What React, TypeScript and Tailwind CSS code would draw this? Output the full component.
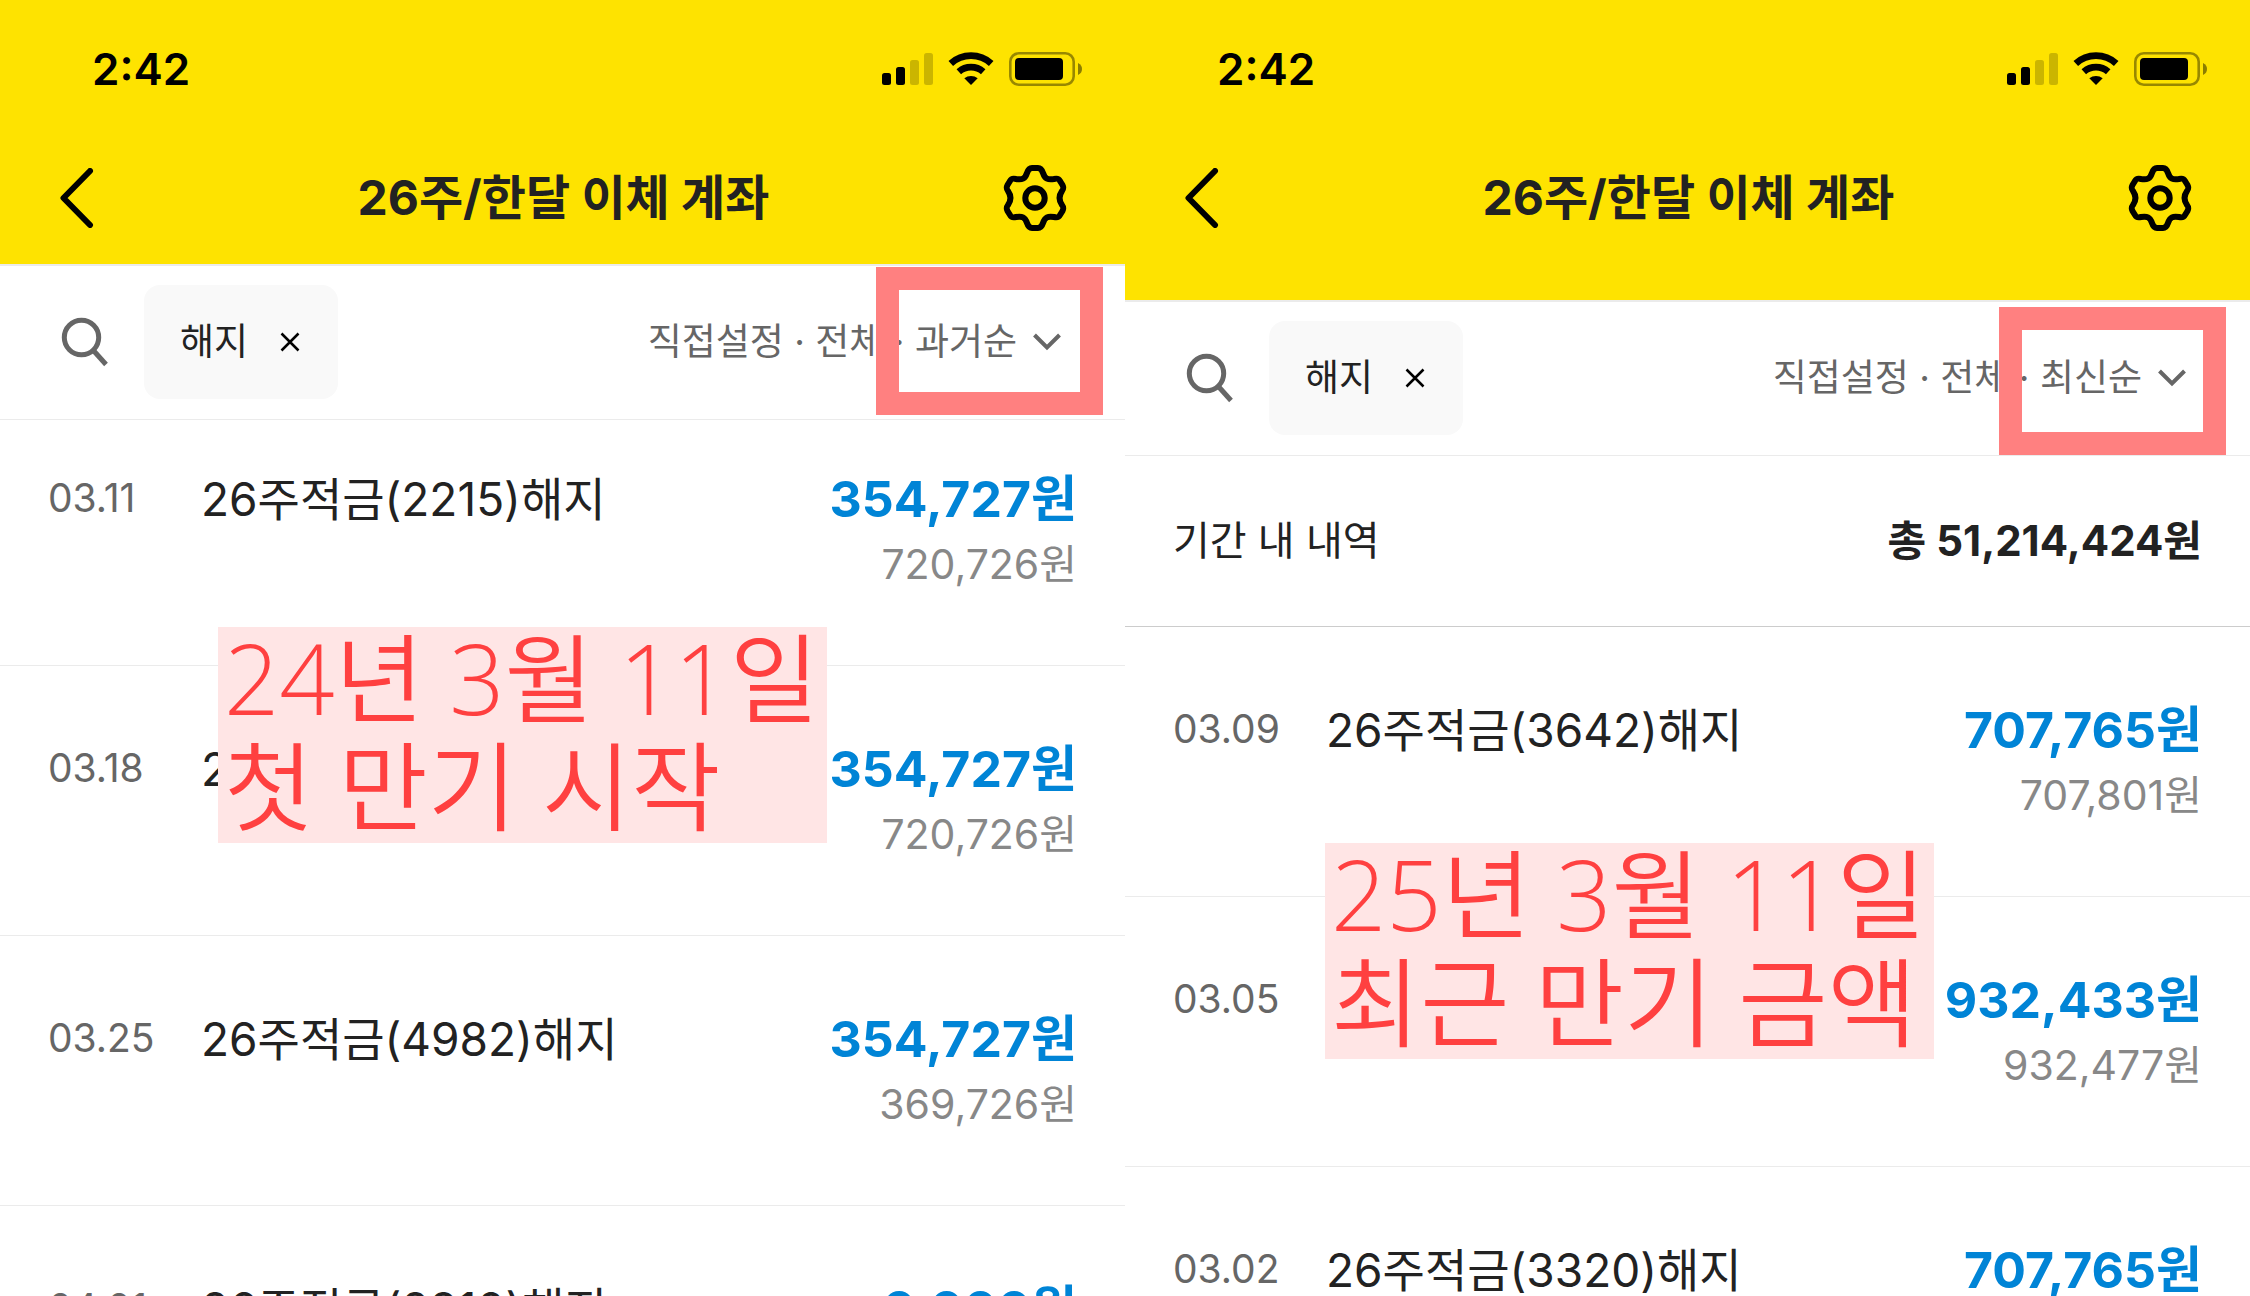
import React from "react";

type Entry = { date: string; title: string; amount: string; balance: string };

const UI = "font-['Inter','Noto_Sans_CJK_KR',sans-serif]";

function StatusIcons() {
  return (
    <svg width="200" height="34" viewBox="0 0 200 34" aria-hidden="true">
      <rect x="0" y="21" width="9" height="12" rx="2.5" />
      <rect x="14" y="15" width="9" height="18" rx="2.5" />
      <rect x="28" y="8" width="9" height="25" rx="2.5" opacity="0.2" />
      <rect x="42" y="1" width="9" height="32" rx="2.5" opacity="0.2" />
      <g fill="none" stroke="#000" strokeWidth="6.8">
        <path d="M68.800 11.400 A30 30 0 0 1 109.200 11.400" />
        <path d="M76.800 19.800 A18.500 18.500 0 0 1 101.200 19.800" />
      </g>
      <path d="M89 33 L82.300 26.300 A10.500 10.500 0 0 1 95.700 26.300 Z" />
      <rect x="128.300" y="1.300" width="63.400" height="31.400" rx="8.500" fill="none" stroke="#000" strokeWidth="2.600" opacity="0.4" />
      <rect x="133" y="6" width="48" height="22" rx="4" />
      <path d="M196 11 C199 12.500 200 14.500 200 17 C200 19.500 199 21.500 196 23 Z" opacity="0.45" />
    </svg>
  );
}

function BackIcon() {
  return (
    <svg width="34" height="60" viewBox="0 0 34 60" fill="none" stroke="#000" strokeWidth="6" strokeLinecap="round" strokeLinejoin="round">
      <path d="M30 3 L3.500 30 L30 57" />
    </svg>
  );
}

function GearIcon() {
  return (
    <svg width="64" height="68" viewBox="-32 -34 64 68" fill="none" stroke="#000" strokeWidth="6" strokeLinejoin="round">
      <path d="M-3 -30 H3 C6 -30 7 -28 8 -25 C10 -19 13 -18 19 -19 C23 -20 24 -19 25 -17 L27.500 -13 C29 -10 28.500 -9 27 -7 C23.500 -2 23.500 2 27 7 C28.500 9 29 10 27.500 13 L25 17 C24 19 23 20 19 19 C13 18 10 19 8 25 C7 28 6 30 3 30 H-3 C-6 30 -7 28 -8 25 C-10 19 -13 18 -19 19 C-23 20 -24 19 -25 17 L-27.500 13 C-29 10 -28.500 9 -27 7 C-23.500 2 -23.500 -2 -27 -7 C-28.500 -9 -29 -10 -27.500 -13 L-25 -17 C-24 -19 -23 -20 -19 -19 C-13 -18 -10 -19 -8 -25 C-7 -28 -6 -30 -3 -30 Z" />
      <circle cx="0" cy="0" r="9.700" />
    </svg>
  );
}

function SearchIcon() {
  return (
    <svg width="48" height="50" viewBox="0 0 48 50" fill="none" stroke="#666" strokeWidth="5">
      <circle cx="20.500" cy="20.500" r="17.200" />
      <path d="M32 33 L45 47.500" />
    </svg>
  );
}

function Header({ tall }: { tall?: boolean }) {
  return (
    <header className={`border-b-2 border-[#ebebeb] bg-[#fee300] ${tall ? "pb-9" : ""}`}>
      <div className="flex h-[132px] items-center justify-between pt-1.5 pr-[43px] pl-[92px]">
        <time className="text-[44px] leading-[48px] font-semibold text-black">2:42</time>
        <StatusIcons />
      </div>
      <div className="grid h-[132px] grid-cols-[100px_1fr_100px] items-center pr-[58px] pl-[60px]">
        <button type="button" aria-label="뒤로" className="justify-self-start">
          <BackIcon />
        </button>
        <h1 className="text-center text-[48px] leading-[60px] font-bold whitespace-nowrap text-[#222]">26주/한달 이체 계좌</h1>
        <button type="button" aria-label="설정" className="justify-self-end">
          <GearIcon />
        </button>
      </div>
    </header>
  );
}

function FilterBar({ order, frame }: { order: string; frame: string }) {
  return (
    <div className="relative flex h-[154px] items-center border-b border-[#ebebeb] pr-16 pb-0.5 pl-[61px] text-[37px] leading-[48px]">
      <button type="button" aria-label="검색">
        <SearchIcon />
      </button>
      <div className="ml-[35px] flex h-[114px] w-[194px] items-center justify-between rounded-[16px] bg-[#f9f9f9] pr-[38px] pl-9 text-[#222]">
        <span>해지</span>
        <button type="button" aria-label="해지 지우기">
          <svg width="20" height="20" viewBox="0 0 20 20" stroke="#000" strokeWidth="2.500">
            <path d="M1.500 1.500 L18.500 18.500 M18.500 1.500 L1.500 18.500" />
          </svg>
        </button>
      </div>
      <button type="button" className="ml-auto flex items-center gap-4 whitespace-nowrap text-[#666]">
        <span>직접설정 · 전체 · {order}</span>
        <svg width="28" height="18" viewBox="0 0 28 18" fill="none" stroke="#666" strokeWidth="4">
          <path d="M1.500 2 L14 14.500 L26.500 2" />
        </svg>
      </button>
      <div className={`pointer-events-none absolute h-[148px] w-[227px] border-[23px] border-[#ff8080] ${frame}`} />
    </div>
  );
}

function Row({ entry, first }: { entry: Entry; first?: boolean }) {
  return (
    <li className={`flex items-start border-b border-[#ebebeb] px-12 ${first ? "h-[246px] pt-12" : "h-[270px] pt-[72px]"}`}>
      <time className="w-[153px] shrink-0 text-[39px] leading-[60px] text-[#666]">{entry.date}</time>
      <span className="grow text-[46px] leading-[62px] whitespace-nowrap text-[#222]">{entry.title}</span>
      <div className="flex flex-col text-right whitespace-nowrap">
        <strong className="text-[50px] leading-[62px] font-bold text-[#0084d6]">{entry.amount}</strong>
        <span className="text-[41px] leading-[68px] text-[#888]">{entry.balance}</span>
      </div>
    </li>
  );
}

function Note({ lines, place }: { lines: string[]; place: string }) {
  return (
    <div className={`absolute flex h-[216px] w-[609px] flex-col justify-center bg-[#ffe5e5] pb-2 pl-1.5 font-['Open_Sans','Noto_Sans_CJK_KR',sans-serif] text-[97px] leading-[108px] font-[350] whitespace-nowrap text-[#ff4040] ${place}`}>
      {lines.map((line) => (
        <p key={line}>{line}</p>
      ))}
    </div>
  );
}

const oldest: Entry[] = [
  { date: "03.11", title: "26주적금(2215)해지", amount: "354,727원", balance: "720,726원" },
  { date: "03.18", title: "26주적금(2215)해지", amount: "354,727원", balance: "720,726원" },
  { date: "03.25", title: "26주적금(4982)해지", amount: "354,727원", balance: "369,726원" },
  { date: "04.01", title: "26주적금(2810)해지", amount: "0,000원", balance: "0원" },
];

const latest: Entry[] = [
  { date: "03.09", title: "26주적금(3642)해지", amount: "707,765원", balance: "707,801원" },
  { date: "03.05", title: "", amount: "932,433원", balance: "932,477원" },
  { date: "03.02", title: "26주적금(3320)해지", amount: "707,765원", balance: "707,801원" },
];

export default function App() {
  return (
    <main className={`grid h-screen grid-cols-2 overflow-hidden bg-white ${UI}`}>
      <section className="min-w-0">
        <Header />
        <FilterBar order="과거순" frame="top-px right-[22px]" />
        <ul className="relative">
          {oldest.map((entry, i) => (
            <Row key={entry.date} entry={entry} first={i === 0} />
          ))}
          <Note lines={["24년 3월 11일", "첫 만기 시작"]} place="top-[207px] left-[218px]" />
        </ul>
      </section>
      <section className="min-w-0">
        <Header tall />
        <FilterBar order="최신순" frame="top-[5px] right-6" />
        <div className="flex h-[171px] items-center justify-between border-b border-[#ccc] px-12 text-[40px] leading-[56px] text-[#222]">
          <span>기간 내 내역</span>
          <strong className="text-[42px] font-bold">총 51,214,424원</strong>
        </div>
        <ul className="relative">
          {latest.map((entry) => (
            <Row key={entry.date} entry={entry} />
          ))}
          <Note lines={["25년 3월 11일", "최근 만기 금액"]} place="top-[216px] left-[200px]" />
        </ul>
      </section>
    </main>
  );
}
